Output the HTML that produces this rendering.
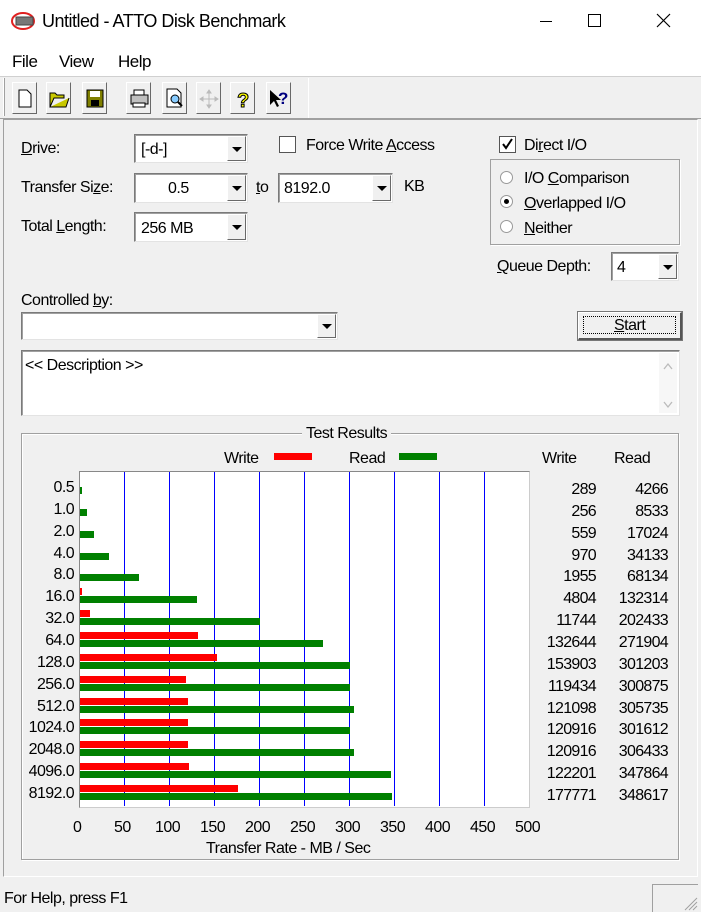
<!DOCTYPE html>
<html><head><meta charset="utf-8"><style>
*{margin:0;padding:0;box-sizing:border-box}
body{width:701px;height:912px;background:#f0f0f0;font-family:"Liberation Sans",sans-serif;font-size:16px;color:#000;position:relative;overflow:hidden}
.a{position:absolute}
.t{position:absolute;white-space:nowrap;letter-spacing:-0.5px;margin-top:1px}
.combo{position:absolute;background:#fff;border:1px solid #7a7a7a;border-right-color:#e3e3e3;border-bottom-color:#e3e3e3;box-shadow:inset 1px 1px 0 #a0a0a0}
.btn{position:absolute;right:1px;top:1px;bottom:1px;width:19px;background:#f0f0f0;border-left:1px solid #fff;border-top:1px solid #fff;border-right:1px solid #696969;border-bottom:1px solid #696969}
.btn:after{content:"";position:absolute;left:4px;top:50%;margin-top:-2px;border-left:5px solid transparent;border-right:5px solid transparent;border-top:5px solid #000}
.tb{position:absolute;top:82px;width:25px;height:32px;border:1px solid #fff;border-right-color:#696969;border-bottom-color:#696969;background:#f0f0f0}
.r{position:absolute;background:#ff0000;height:7px;left:80px}
.g{position:absolute;background:#008000;height:7px;left:80px}
.gl{position:absolute;top:472px;height:334px;width:1px;background:#0000ff}
.lab{position:absolute;right:627px;text-align:right;letter-spacing:-0.6px;margin-top:1px}
.num{position:absolute;text-align:right;letter-spacing:-0.7px;margin-top:1px}
u{text-decoration:underline}
</style></head><body>
<div class="a" style="left:0;top:0;width:701px;height:42px;background:#fff"></div>
<svg class="a" style="left:10px;top:11px" width="30" height="20"><ellipse cx="13" cy="10" rx="11" ry="8" fill="none" stroke="#e02020" stroke-width="2"/><rect x="6" y="6" width="17" height="8" fill="#777" stroke="#444"/></svg>
<div class="t" style="left:42px;top:10px;font-size:18px">Untitled - ATTO Disk Benchmark</div>
<div class="a" style="left:540px;top:21px;width:12px;height:1px;background:#000"></div>
<div class="a" style="left:588px;top:14px;width:13px;height:13px;border:1px solid #000"></div>
<svg class="a" style="left:656px;top:13px" width="15" height="15"><path d="M1 1L14 14M14 1L1 14" stroke="#000" stroke-width="1.2"/></svg>
<div class="a" style="left:0;top:42px;width:701px;height:34px;background:#fff"></div>
<div class="t" style="left:12px;top:51px;font-size:17px">File</div>
<div class="t" style="left:59px;top:51px;font-size:17px">View</div>
<div class="t" style="left:118px;top:51px;font-size:17px">Help</div>
<div class="a" style="left:0;top:76px;width:701px;height:1px;background:#d0d0d0"></div>
<div class="a" style="left:3px;top:78px;width:2px;height:38px;border-left:1px solid #fff;border-right:1px solid #a0a0a0"></div>
<div class="a" style="left:308px;top:78px;width:1px;height:40px;background:#fff"></div>
<div class="tb" style="left:12px"><svg width="23" height="30"><path d="M6 7h8l4 4v13H6z" fill="#fff" stroke="#000"/></svg></div>
<div class="tb" style="left:46px"><svg width="23" height="30"><path d="M3 24V10h5l2 2h7v3H7L3 24h16l3-9" fill="#c8c800" stroke="#000"/></svg></div>
<div class="tb" style="left:82px"><svg width="23" height="30"><rect x="4" y="7" width="16" height="17" fill="#808000" stroke="#000"/><rect x="7" y="8" width="10" height="6" fill="#fff"/><rect x="8" y="17" width="8" height="6" fill="#000"/></svg></div>
<div class="tb" style="left:126px"><svg width="23" height="30"><rect x="4" y="12" width="17" height="9" fill="#c0c0c0" stroke="#000"/><rect x="7" y="7" width="10" height="5" fill="#fff" stroke="#000"/><rect x="6" y="20" width="12" height="4" fill="#fff" stroke="#000"/></svg></div>
<div class="tb" style="left:162px"><svg width="23" height="30"><path d="M4 6h10l4 4v14H4z" fill="#fff" stroke="#000"/><circle cx="12" cy="16" r="4" fill="#8cf" stroke="#000"/><path d="M15 19l4 4" stroke="#000" stroke-width="2"/></svg></div>
<div class="tb" style="left:196px"><svg width="23" height="30"><path d="M12 7v18M3 16h18M12 7l-2 3h4zM12 25l-2-3h4zM3 16l3-2v4zM21 16l-3-2v4z" stroke="#bbb" fill="#bbb"/></svg></div>
<div class="tb" style="left:230px"><svg width="23" height="30"><text x="6" y="24" font-family="Liberation Sans" font-weight="bold" font-size="20" fill="#ff0" stroke="#000" stroke-width="1">?</text></svg></div>
<div class="tb" style="left:266px"><svg width="23" height="30"><path d="M3 7v15l4-4 3 6 2-1-3-6h5z" fill="#000"/><text x="11" y="21" font-family="Liberation Sans" font-weight="bold" font-size="17" fill="#000080">?</text></svg></div>
<div class="a" style="left:0;top:118px;width:701px;height:1px;background:#a0a0a0"></div>
<div class="a" style="left:3px;top:119px;width:695px;height:758px;border:1px solid #a0a0a0;border-right-color:#fff;border-bottom-color:#fff"></div>

<div class="t" style="left:21px;top:139px"><u>D</u>rive:</div>
<div class="combo" style="left:134px;top:134px;width:114px;height:29px"><span class="t" style="left:6px;top:5px">[-d-]</span><div class="btn"></div></div>
<div class="a" style="left:279px;top:136px;width:17px;height:17px;background:#fff;border:1px solid #555"></div>
<div class="t" style="left:306px;top:136px">Force Write <u>A</u>ccess</div>
<div class="a" style="left:499px;top:136px;width:17px;height:17px;background:#fff;border:1px solid #555"><svg width="15" height="15" style="position:absolute;left:0;top:0"><path d="M3 7l3 4 6-9" stroke="#000" stroke-width="2" fill="none"/></svg></div>
<div class="t" style="left:524px;top:136px">Di<u>r</u>ect I/O</div>
<div class="a" style="left:490px;top:159px;width:190px;height:86px;border:1px solid #a0a0a0;box-shadow:1px 1px 0 #fff"></div>
<div class="a" style="left:500px;top:171px;width:13px;height:13px;border-radius:50%;background:#fff;border:1px solid #999"></div>
<div class="t" style="left:524px;top:169px">I/O <u>C</u>omparison</div>
<div class="a" style="left:500px;top:195px;width:13px;height:13px;border-radius:50%;background:#fff;border:1px solid #999"><div class="a" style="left:3px;top:3px;width:5px;height:5px;border-radius:50%;background:#000"></div></div>
<div class="t" style="left:524px;top:194px"><u>O</u>verlapped I/O</div>
<div class="a" style="left:500px;top:220px;width:13px;height:13px;border-radius:50%;background:#fff;border:1px solid #999"></div>
<div class="t" style="left:524px;top:219px"><u>N</u>either</div>

<div class="t" style="left:21px;top:178px">Transfer Si<u>z</u>e:</div>
<div class="combo" style="left:134px;top:173px;width:114px;height:30px"><span class="t" style="left:33px;top:5px">0.5</span><div class="btn"></div></div>
<div class="t" style="left:256px;top:178px"><u>t</u>o</div>
<div class="combo" style="left:278px;top:173px;width:115px;height:30px"><span class="t" style="left:5px;top:5px">8192.0</span><div class="btn"></div></div>
<div class="t" style="left:404px;top:177px">KB</div>
<div class="t" style="left:21px;top:217px">Total <u>L</u>ength:</div>
<div class="combo" style="left:134px;top:212px;width:114px;height:30px"><span class="t" style="left:6px;top:6px">256 MB</span><div class="btn"></div></div>
<div class="t" style="left:497px;top:257px"><u>Q</u>ueue Depth:</div>
<div class="combo" style="left:611px;top:252px;width:68px;height:29px"><span class="t" style="left:5px;top:5px">4</span><div class="btn"></div></div>
<div class="t" style="left:21px;top:291px">Controlled <u>b</u>y:</div>
<div class="combo" style="left:21px;top:312px;width:317px;height:28px"><div class="btn"></div></div>
<div class="a" style="left:578px;top:312px;width:104px;height:28px;background:#f0f0f0;border:1px solid #fff;border-right:2px solid #555;border-bottom:2px solid #555;outline:1px solid #777"><div class="a" style="left:4px;top:3px;width:93px;height:18px;border:1px dotted #000"></div><span class="t" style="left:35px;top:3px"><u>S</u>tart</span></div>
<div class="combo" style="left:21px;top:350px;width:659px;height:66px"><span class="t" style="left:3px;top:5px">&lt;&lt; Description &gt;&gt;</span><div class="a" style="right:2px;top:2px;width:18px;height:60px;background:#f7f7f7"></div><svg class="a" style="right:5px;top:10px" width="12" height="50"><path d="M2 8l4-5 4 5M2 41l4 5 4-5" stroke="#bbb" fill="none" stroke-width="1.3"/></svg></div>

<div class="a" style="left:21px;top:433px;width:658px;height:427px;border:1px solid #a0a0a0;box-shadow:1px 1px 0 #fff,inset 1px 1px 0 #fff"></div>
<div class="t" style="left:302px;top:424px;background:#f0f0f0;padding:0 4px">Test Results</div>
<div class="t" style="left:224px;top:449px">Write</div>
<div class="a" style="left:274px;top:453px;width:38px;height:7px;background:#f00"></div>
<div class="t" style="left:349px;top:449px">Read</div>
<div class="a" style="left:399px;top:453px;width:38px;height:7px;background:#008000"></div>
<div class="t" style="left:542px;top:449px">Write</div>
<div class="t" style="left:614px;top:449px">Read</div>

<div class="a" style="left:79px;top:471px;width:451px;height:337px;background:#fff;border:1px solid #888;border-right-color:#ccc;border-bottom-color:#ccc"></div>
<div class="gl" style="left:124px"></div><div class="gl" style="left:169px"></div><div class="gl" style="left:214px"></div><div class="gl" style="left:259px"></div><div class="gl" style="left:304px"></div><div class="gl" style="left:349px"></div><div class="gl" style="left:394px"></div><div class="gl" style="left:439px"></div><div class="gl" style="left:484px"></div>

<div class="g" style="top:487px;width:2px"></div>
<div class="g" style="top:509px;width:7px"></div>
<div class="g" style="top:531px;width:14px"></div>
<div class="g" style="top:553px;width:29px"></div>
<div class="g" style="top:574px;width:59px"></div>
<div class="r" style="top:588px;width:2px"></div><div class="g" style="top:596px;width:117px"></div>
<div class="r" style="top:610px;width:10px"></div><div class="g" style="top:618px;width:180px"></div>
<div class="r" style="top:632px;width:118px"></div><div class="g" style="top:640px;width:243px"></div>
<div class="r" style="top:654px;width:137px"></div><div class="g" style="top:662px;width:270px"></div>
<div class="r" style="top:676px;width:106px"></div><div class="g" style="top:684px;width:270px"></div>
<div class="r" style="top:698px;width:108px"></div><div class="g" style="top:706px;width:274px"></div>
<div class="r" style="top:719px;width:108px"></div><div class="g" style="top:727px;width:270px"></div>
<div class="r" style="top:741px;width:108px"></div><div class="g" style="top:749px;width:274px"></div>
<div class="r" style="top:763px;width:109px"></div><div class="g" style="top:771px;width:311px"></div>
<div class="r" style="top:785px;width:158px"></div><div class="g" style="top:793px;width:312px"></div>

<div class="lab" style="top:478px">0.5</div><div class="lab" style="top:500px">1.0</div><div class="lab" style="top:522px">2.0</div><div class="lab" style="top:544px">4.0</div><div class="lab" style="top:565px">8.0</div><div class="lab" style="top:587px">16.0</div><div class="lab" style="top:609px">32.0</div><div class="lab" style="top:631px">64.0</div><div class="lab" style="top:653px">128.0</div><div class="lab" style="top:675px">256.0</div><div class="lab" style="top:697px">512.0</div><div class="lab" style="top:718px">1024.0</div><div class="lab" style="top:740px">2048.0</div><div class="lab" style="top:762px">4096.0</div><div class="lab" style="top:784px">8192.0</div>

<div class="num" style="left:540px;width:56px;top:478px;line-height:21.86px">289<br>256<br>559<br>970<br>1955<br>4804<br>11744<br>132644<br>153903<br>119434<br>121098<br>120916<br>120916<br>122201<br>177771</div>
<div class="num" style="left:600px;width:68px;top:478px;line-height:21.86px">4266<br>8533<br>17024<br>34133<br>68134<br>132314<br>202433<br>271904<br>301203<br>300875<br>305735<br>301612<br>306433<br>347864<br>348617</div>

<div class="t" style="left:73px;top:818px">0</div>
<div class="t" style="left:114px;top:818px">50</div>
<div class="t" style="left:155px;top:818px">100</div>
<div class="t" style="left:200px;top:818px">150</div>
<div class="t" style="left:245px;top:818px">200</div>
<div class="t" style="left:290px;top:818px">250</div>
<div class="t" style="left:335px;top:818px">300</div>
<div class="t" style="left:380px;top:818px">350</div>
<div class="t" style="left:425px;top:818px">400</div>
<div class="t" style="left:470px;top:818px">450</div>
<div class="t" style="left:515px;top:818px">500</div>
<div class="t" style="left:206px;top:839px">Transfer Rate - MB / Sec</div>

<div class="t" style="left:4px;top:889px">For Help, press F1</div>
<div class="a" style="left:652px;top:884px;width:46px;height:28px;border:1px solid #a0a0a0;border-right:none;border-bottom:none"></div>
<svg class="a" style="left:683px;top:896px" width="16" height="16"><path d="M14 2L2 14M14 6L6 14M14 10L10 14" stroke="#a0a0a0"/></svg>
</body></html>
